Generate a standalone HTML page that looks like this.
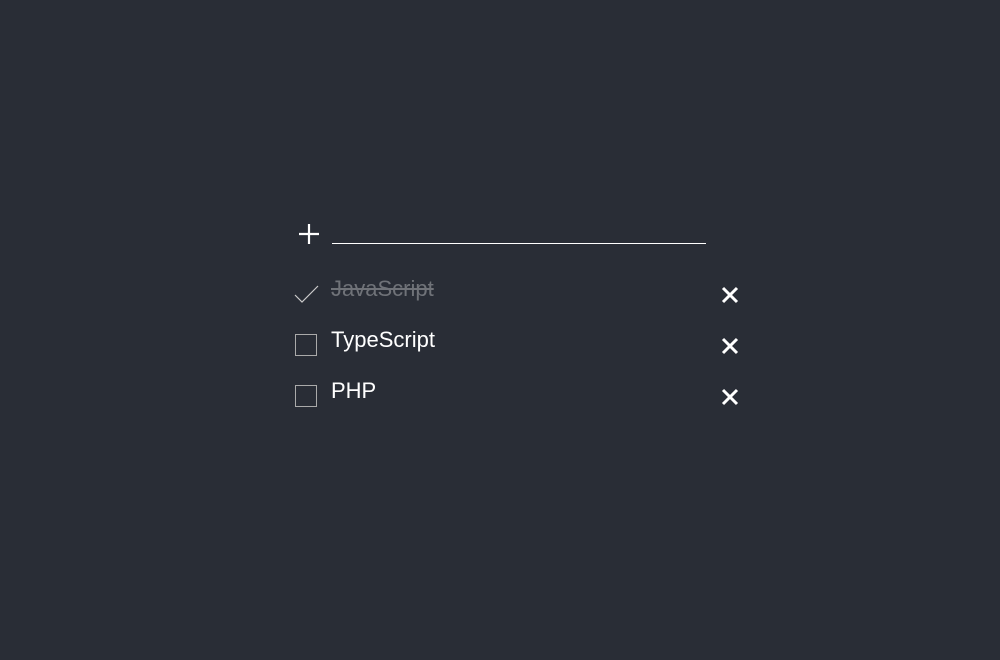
<!DOCTYPE html>
<html><head><style>
html,body{margin:0;padding:0;background:#292d36;width:1000px;height:660px;overflow:hidden;font-family:"Liberation Sans",sans-serif}
.t{position:absolute;left:331px;font-size:22px;color:#fff;line-height:1}
.box{position:absolute;left:295px;width:20px;height:20px;border:1px solid #aaa}
svg{position:absolute}
</style></head><body>
<svg style="left:298px;top:223px" width="22" height="22"><path d="M11 1V21M1 11H21" stroke="#fff" stroke-width="2.2"/></svg>
<div style="position:absolute;left:332px;top:243px;width:374px;height:1px;background:#fff"></div>
<svg style="left:293px;top:283px" width="28" height="22"><path d="M2 12L9 19L25 3" stroke="#ccc" stroke-width="1.2" fill="none"/></svg>
<div class="t" style="top:278px;color:#6f7278;text-decoration:line-through">JavaScript</div>
<div class="box" style="top:334px"></div>
<div class="t" style="top:329px">TypeScript</div>
<div class="box" style="top:385px"></div>
<div class="t" style="top:380px">PHP</div>
<svg style="left:720px;top:285px" width="20" height="20"><path d="M3 3L17 17M17 3L3 17" stroke="#fff" stroke-width="3"/></svg>
<svg style="left:720px;top:336px" width="20" height="20"><path d="M3 3L17 17M17 3L3 17" stroke="#fff" stroke-width="3"/></svg>
<svg style="left:720px;top:387px" width="20" height="20"><path d="M3 3L17 17M17 3L3 17" stroke="#fff" stroke-width="3"/></svg>
</body></html>
